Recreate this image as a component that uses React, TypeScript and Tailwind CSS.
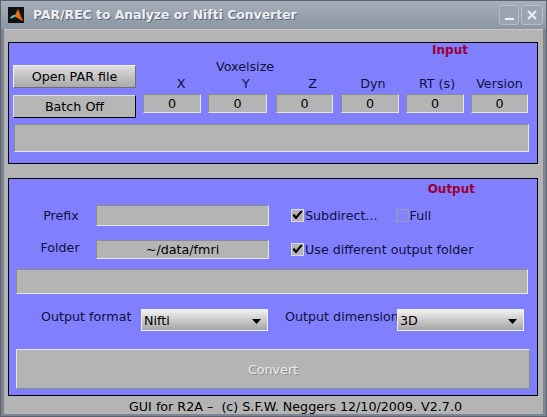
import React from "react";

const labelCls = "text-[12.7px] leading-[14px] text-[#10103a] whitespace-nowrap";

// sunken grey edit field, like a MATLAB uicontrol
const Field = ({ className, text }: { className: string; text?: string }) => (
  <div
    className={`shrink-0 flex items-center justify-center bg-[#b4b4b4] border border-t-[#8c8c8c] border-l-[#8c8c8c] border-b-[#e6e6e6] border-r-[#e6e6e6] text-[12.7px] text-black ${className}`}
  >
    {text}
  </div>
);

const CheckBox = ({ checked, label }: { checked: boolean; label: string }) => (
  <div className="flex items-center">
    {checked ? (
      <div className="w-[13px] h-[13px] bg-[#b4b4b4] border border-[#d8d8e8] flex items-center justify-center">
        <svg width="11" height="11" viewBox="0 0 11 11">
          <path d="M1 5.5 L4 9 L10 1.5 L9 1 L4 6.8 L2.2 4.4 Z" fill="#000" stroke="#000" strokeWidth="1" strokeLinejoin="round" />
        </svg>
      </div>
    ) : (
      <div className="w-[13px] h-[13px] border border-[#9b9bc0] bg-[#8585f8]" />
    )}
    <span className="ml-[1px] text-[12.7px] text-[#10103a] whitespace-nowrap">{label}</span>
  </div>
);

const Select = ({ value }: { value: string }) => (
  <div className="relative w-[127px] h-[22px] border border-[#f0f0f0] bg-gradient-to-b from-[#f2f2f2] to-[#a6a6a6] flex items-center pl-[2px] text-[12.7px] text-black">
    {value}
    <svg className="absolute right-[6px] top-[9px]" width="9" height="5" viewBox="0 0 9 5">
      <path d="M0 0 H9 L4.5 5 Z" fill="#000" />
    </svg>
  </div>
);

const MatlabIcon = () => (
  <svg width="16" height="16" viewBox="0 0 16 16">
    <rect width="16" height="16" fill="#111" />
    <path d="M2 11 L7 8 L10 2 L13 9 L15 14 L11 12 L8 10 Z" fill="#e8731c" />
    <path d="M10 2 L13 9 L15 14 L12 10 Z" fill="#b8400e" />
    <path d="M1.5 11 L5 8 L7.5 8.3 L4 11.5 Z" fill="#3fc8e8" />
  </svg>
);

export default function App() {
  return (
    <div
      className="w-[547px] h-[417px] flex flex-col bg-[#7c8490] border border-[#5c636e]"
      style={{ fontFamily: "'DejaVu Sans', Verdana, sans-serif" }}
    >
      {/* title bar */}
      <div className="shrink-0 h-[28px] flex items-center bg-gradient-to-b from-[#a6aebb] to-[#8c96a4] pl-[7px] pr-[3px]">
        <MatlabIcon />
        <span className="ml-[9px] text-[12.4px] font-bold text-[#eceef2] [text-shadow:1px_1px_0_#5e6673]">
          PAR/REC to Analyze or Nifti Converter
        </span>
        <div className="ml-auto flex gap-[2px]">
          <div className="w-[20px] h-[20px] rounded-[3px] border border-[#b6bdc8] bg-[#9ba4b2] flex items-end justify-center pb-[4px]">
            <div className="w-[9px] h-[2px] bg-[#eef0f4]" />
          </div>
          <div className="w-[22px] h-[20px] rounded-[3px] border border-[#b6bdc8] bg-[#9ba4b2] flex items-center justify-center">
            <svg width="10" height="10" viewBox="0 0 10 10">
              <path d="M1 1 L9 9 M9 1 L1 9" stroke="#eef0f4" strokeWidth="2" />
            </svg>
          </div>
        </div>
      </div>

      {/* figure body */}
      <div className="flex-1 mx-[3px] mb-[2px] bg-[#b4b4b4] border-t border-[#c8c8c8] flex flex-col">
        {/* input panel */}
        <div className="shrink-0 mt-[12px] ml-[4px] w-[530px] h-[122px] border border-black bg-[#8080ff] flex flex-col">
          <div className="flex justify-end pr-[69px]">
            <span className="text-[12px] leading-[14px] font-bold text-[#9a0036]">Input</span>
          </div>
          <div className="flex">
            <div className="ml-[4px] w-[123px] flex flex-col">
              <div className="mt-[8px] h-[23px] flex items-center justify-center border border-t-[#f4f4f4] border-l-[#f4f4f4] border-b-[#6e6e6e] border-r-[#6e6e6e] bg-gradient-to-b from-[#dedede] to-[#a9a9a9] text-[12.7px] text-black">
                Open PAR file
              </div>
              <div className="mt-[7px] h-[23px] flex items-center justify-center border border-t-[#e2e2e2] border-l-[#e2e2e2] border-b-black border-r-black bg-[#b6b6b6] text-[12.7px] text-black">
                Batch Off
              </div>
            </div>
            <div className="flex flex-col">
              <div className={`mt-[3px] ml-[80px] ${labelCls}`}>Voxelsize</div>
              <div className="mt-[3px] flex">
                <div className={`ml-[7px] w-[58px] pl-[18px] text-center ${labelCls}`}>X</div>
                <div className={`ml-[7px] w-[59px] pl-[17px] text-center ${labelCls}`}>Y</div>
                <div className={`ml-[9px] w-[57px] pl-[16px] text-center ${labelCls}`}>Z</div>
                <div className={`ml-[8px] w-[58px] pl-[6px] text-center ${labelCls}`}>Dyn</div>
                <div className={`ml-[7px] w-[58px] pl-[4px] text-center ${labelCls}`}>RT (s)</div>
                <div className={`ml-[7px] w-[57px] text-center ${labelCls}`}>Version</div>
              </div>
              <div className="mt-[3px] flex">
                <Field className="ml-[7px] w-[58px] h-[19px]" text="0" />
                <Field className="ml-[7px] w-[59px] h-[19px]" text="0" />
                <Field className="ml-[9px] w-[57px] h-[19px]" text="0" />
                <Field className="ml-[8px] w-[58px] h-[19px]" text="0" />
                <Field className="ml-[7px] w-[58px] h-[19px]" text="0" />
                <Field className="ml-[7px] w-[57px] h-[19px]" text="0" />
              </div>
            </div>
          </div>
          <Field className="mt-[6px] ml-[5px] w-[515px] h-[28px]" />
        </div>

        {/* output panel */}
        <div className="shrink-0 mt-[14px] ml-[4px] w-[530px] h-[218px] border border-black bg-[#8080ff] flex flex-col">
          <div className="mt-[3px] flex justify-end pr-[62px]">
            <span className="text-[12px] leading-[14px] font-bold text-[#9a0036]">Output</span>
          </div>
          <div className="mt-[9px] flex items-center">
            <div className={`ml-[17px] w-[70px] text-center ${labelCls}`}>Prefix</div>
            <Field className="w-[173px] h-[21px]" />
            <div className="ml-[22px]">
              <CheckBox checked label="Subdirect..." />
            </div>
            <div className="ml-[18px]">
              <CheckBox checked={false} label="Full" />
            </div>
          </div>
          <div className="mt-[14px] flex items-center">
            <div className={`ml-[16px] w-[70px] text-center ${labelCls} -mt-[4px]`}>Folder</div>
            <Field className="ml-[1px] w-[173px] h-[19px]" text="~/data/fmri" />
            <div className="ml-[22px]">
              <CheckBox checked label="Use different output folder" />
            </div>
          </div>
          <Field className="mt-[10px] ml-[7px] w-[512px] h-[25px]" />
          <div className="mt-[15px] flex items-start">
            <div className={`ml-[32px] w-[89px] mt-[1px] ${labelCls}`}>Output format</div>
            <div className="ml-[11px]">
              <Select value="Nifti" />
            </div>
            <div className={`ml-[17px] w-[112px] mt-[1px] ${labelCls}`}>Output dimension</div>
            <Select value="3D" />
          </div>
          <div className="mt-[18px] ml-[7px] w-[514px] h-[40px] flex items-center justify-center border border-t-[#e4e4e4] border-l-[#e4e4e4] border-b-[#8a8a8a] border-r-[#8a8a8a] bg-[#b4b4b4] text-[12.7px] text-[#ececec] [text-shadow:1px_1px_0_#8c8c8c]">
            Convert
          </div>
        </div>

        {/* footer */}
        <div className="flex-1 min-h-0 flex items-end pl-[125px] text-[12.7px] leading-[14px] text-black whitespace-pre">
          GUI for R2A –  (c) S.F.W. Neggers 12/10/2009. V2.7.0
        </div>
      </div>
    </div>
  );
}
